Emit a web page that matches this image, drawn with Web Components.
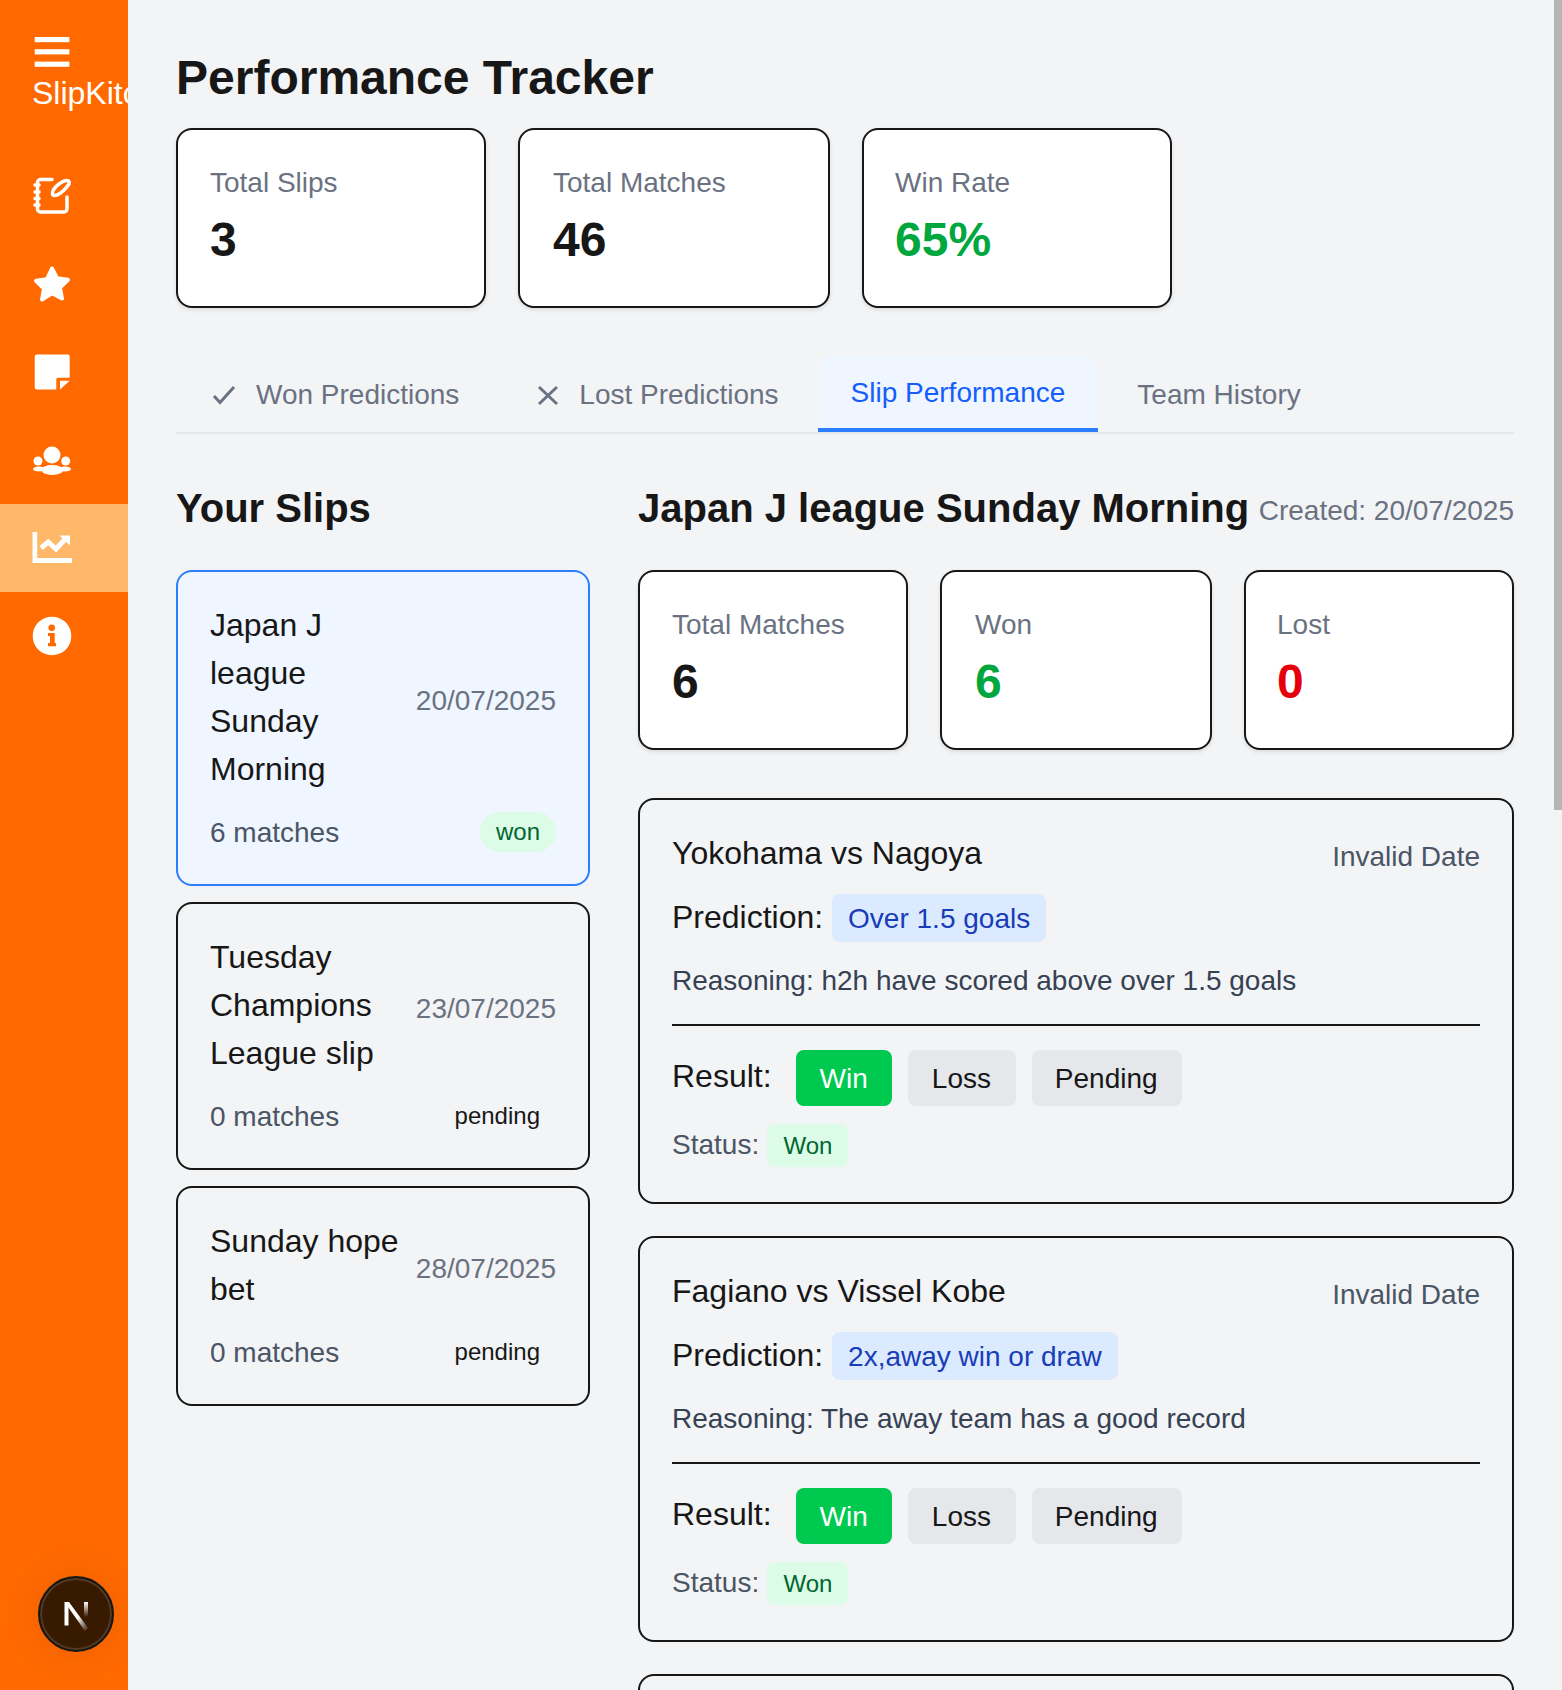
<!DOCTYPE html>
<html>
<head>
<meta charset="utf-8">
<title>Performance Tracker</title>
<style>
html, body {
  margin: 0;
  height: 1690px;
  overflow: hidden;
  background: #f3f4f6;
  color: #171717;
  font-family: "Liberation Sans", Arial, sans-serif;
}
</style>
</head>
<body>

<tracker-page>
  <side-bar slot="nav" brand="SlipKitchen"></side-bar>

  <page-title>Performance Tracker</page-title>

  <stat-grid columns="4">
    <stat-card><span slot="label">Total Slips</span>3</stat-card>
    <stat-card nudge="right"><span slot="label">Total Matches</span>46</stat-card>
    <stat-card nudge="left" tone="won"><span slot="label">Win Rate</span>65%</stat-card>
  </stat-grid>

  <tab-bar>
    <tab-item icon="check">Won Predictions</tab-item>
    <tab-item icon="cross">Lost Predictions</tab-item>
    <tab-item active>Slip Performance</tab-item>
    <tab-item>Team History</tab-item>
  </tab-bar>

  <split-view>
    <section-head slot="left">Your Slips</section-head>
    <slip-card slot="left" selected badge="won" date="20/07/2025" matches="6 matches">Japan J league Sunday Morning</slip-card>
    <slip-card slot="left" badge="pending" date="23/07/2025" matches="0 matches">Tuesday Champions League slip</slip-card>
    <slip-card slot="left" badge="pending" date="28/07/2025" matches="0 matches">Sunday hope bet</slip-card>

    <section-head created="Created: 20/07/2025">Japan J league Sunday Morning</section-head>
    <stat-grid columns="3">
      <stat-card><span slot="label">Total Matches</span>6</stat-card>
      <stat-card nudge="right" tone="won"><span slot="label">Won</span>6</stat-card>
      <stat-card nudge="left" tone="lost"><span slot="label">Lost</span>0</stat-card>
    </stat-grid>
    <match-list>
      <match-card teams="Yokohama vs Nagoya" date="Invalid Date" prediction="Over 1.5 goals" reasoning="h2h have scored above over 1.5 goals"></match-card>
      <match-card teams="Fagiano vs Vissel Kobe" date="Invalid Date" prediction="2x,away win or draw" reasoning="The away team has a good record"></match-card>
      <match-card bare></match-card>
    </match-list>
  </split-view>
</tracker-page>

<script>
class TrackerPage extends HTMLElement {
  constructor() {
    super();
    this._root = this.attachShadow({mode: 'open'});
  }
  connectedCallback() {
    this._root.innerHTML = `
<style>
:host { display: flex; height: 1690px; overflow: hidden; position: relative; }
.main { flex: 1; min-width: 0; padding: 48px 48px 0; }
.thumb { position: absolute; top: 0; right: 0; width: 8px; height: 810px; background: #b5b5b5; }
</style>
<slot name="nav"></slot>
<div class="main"><slot></slot></div>
<div class="thumb"></div>
`;
  }
}

class SideBar extends HTMLElement {
  constructor() {
    super();
    this._root = this.attachShadow({mode: 'open'});
  }
  connectedCallback() {
    this._root.innerHTML = `
<style>
:host { display: block; position: relative; flex: none; width: 128px; height: 1690px; background: #ff6900; color: #fff; overflow: hidden; }
.head { padding: 32px 0 38px 32px; white-space: nowrap; }
.head svg { display: block; }
.brand { font-size: 32px; line-height: 42px; }
.item { height: 88px; padding: 24px 32px; box-sizing: border-box; }
.item.on { background: #ffb86a; }
svg { display: block; width: 40px; height: 40px; }
.dev {
  position: absolute; left: 38px; top: 1576px; width: 76px; height: 76px; box-sizing: border-box;
  border-radius: 50%; background: #381a00; border: 2px solid #171717;
  box-shadow: inset 0 0 0 2px #533a22, 0 0 40px rgba(0,0,0,.08);
  display: flex; align-items: center; justify-content: center;
}
.dev svg { width: 24px; height: 29px; margin: 4px 1px 0 0; }
</style>
<div class="head">
  <svg viewBox="0 0 40 40" fill="#fff"><rect x="2.7" y="5" width="34.7" height="5.2"/><rect x="2.7" y="17.2" width="34.7" height="5.2"/><rect x="2.7" y="29.6" width="34.7" height="5.2"/></svg>
  <div class="brand">${this.getAttribute('brand')}</div>
</div>
<div class="item">
  <svg viewBox="0 0 40 40" fill="none" stroke="#fff" stroke-width="3.5" stroke-linecap="round" stroke-linejoin="round">
    <path d="M20 3.500H8.500a3 3 0 0 0-3 3V33a3 3 0 0 0 3 3h23.500a3 3 0 0 0 3-3V21"/>
    <path d="M3 9h4M3 16h4M3 22.500h4M3 29h4"/>
    <path d="M20.500 17.500C20.500 12 30 4.500 35 4.500c2 0 2.800 2 2 3.500-3 5-10 11.500-14.500 11.500-1.500 0-2-.5-2-2z"/>
  </svg>
</div>
<div class="item">
  <svg viewBox="0 0 40 40" fill="#fff" stroke="#fff" stroke-width="4" stroke-linejoin="round"><path d="M20 4.500l5 9.700 11 1.600-8 7.700 2 11-10-5.200L10 35.500l2-11-8-7.700 11-1.600z"/></svg>
</div>
<div class="item">
  <svg viewBox="0 0 40 40" fill="#fff"><path d="M4.700 2.500h31a2 2 0 0 1 2 2v21.300H26a1.700 1.700 0 0 0-1.700 1.700v10H4.700a2 2 0 0 1-2-2V4.500a2 2 0 0 1 2-2z"/><path d="M28 28.800h9.700L28 37.500z"/></svg>
</div>
<div class="item">
  <svg viewBox="0 0 40 40" fill="#fff"><circle cx="20" cy="15" r="8.500"/><circle cx="6" cy="21" r="4.500"/><circle cx="33.700" cy="21" r="4.500"/><ellipse cx="20.300" cy="30" rx="11" ry="5"/><ellipse cx="7" cy="29" rx="6" ry="2.500"/><ellipse cx="33" cy="29" rx="6" ry="2.500"/></svg>
</div>
<div class="item on">
  <svg viewBox="0 0 40 40" fill="#fff"><path d="M0.500 4h4.700v26H40v5H0.500z"/><path d="M27.500 7.500h10.500V17.500z"/><path d="M9 20l7.300-6 7.700 7 9.300-10" fill="none" stroke="#fff" stroke-width="5"/></svg>
</div>
<div class="item">
  <svg viewBox="0 0 40 40"><circle cx="20" cy="20" r="19.300" fill="#fff"/><circle cx="19.700" cy="11.700" r="3.300" fill="#ff6900"/><path d="M16 17h6.700v10H24v3.300h-8V27h2v-7h-2z" fill="#ff6900"/></svg>
</div>
<div class="dev">
  <svg viewBox="0 0 24 29">
    <defs>
      <linearGradient id="d" x1="0" y1="0" x2="1" y2="1"><stop offset=".55" stop-color="#fff"/><stop offset="1" stop-color="#fff" stop-opacity="0"/></linearGradient>
      <linearGradient id="r" x1="0" y1="0" x2="0" y2="1"><stop offset="0" stop-color="#fff"/><stop offset="1" stop-color="#fff" stop-opacity="0"/></linearGradient>
    </defs>
    <rect x="0.500" y="0" width="4" height="23.500" fill="#fff"/>
    <path d="M0.500 0h4.500l19 26-3 3z" fill="url(#d)"/>
    <rect x="20" y="0" width="4" height="15" fill="url(#r)"/>
  </svg>
</div>
`;
  }
}

class PageTitle extends HTMLElement {
  constructor() {
    super();
    this.attachShadow({mode: 'open'}).innerHTML = `
<style>
:host { display: block; font-size: 48px; line-height: 64px; font-weight: 700; margin: -2px 0 18px; }
</style>
<slot></slot>
`;
  }
}

class StatGrid extends HTMLElement {
  constructor() {
    super();
    // reference columns land on whole css px at scale 2, so the middle one is wider
    this.attachShadow({mode: 'open'}).innerHTML = `
<style>
:host { display: grid; gap: 32px; grid-template-columns: 270px 272px 270px; }
:host([columns="4"]) { grid-template-columns: 310px 312px 310px 1fr; }
</style>
<slot></slot>
`;
  }
}

class StatCard extends HTMLElement {
  constructor() {
    super();
    this.attachShadow({mode: 'open'}).innerHTML = `
<style>
:host {
  display: block; background: #fff; border: 2px solid #171717; border-radius: 16px;
  padding: 32px; box-shadow: 0 2px 4px rgba(0,0,0,.1); height: 180px; box-sizing: border-box;
}
:host([nudge="right"]) { padding-left: 33px; }
:host([nudge="left"]) { padding-left: 31px; }
.label { font-size: 28px; line-height: 40px; color: #6a7282; margin-top: 1px; }
.value { font-size: 48px; line-height: 64px; font-weight: 700; margin-top: 5px; }
:host([tone="won"]) .value { color: #00a63e; }
:host([tone="lost"]) .value { color: #e7000b; }
</style>
<div class="label"><slot name="label"></slot></div>
<div class="value"><slot></slot></div>
`;
  }
}

class TabBar extends HTMLElement {
  constructor() {
    super();
    this.attachShadow({mode: 'open'}).innerHTML = `
<style>
:host { display: flex; gap: 8px; margin-top: 48px; border-bottom: 2px solid #e5e7eb; }
</style>
<slot></slot>
`;
  }
}

const TAB_ICONS = {
  check: '<polyline points="6,17 12,23.5 26,8"/>',
  cross: '<path d="M8 8l18 17M26 8L8 25"/>'
};

class TabItem extends HTMLElement {
  constructor() {
    super();
    this._root = this.attachShadow({mode: 'open'});
  }
  connectedCallback() {
    let icon = TAB_ICONS[this.getAttribute('icon')];
    this._root.innerHTML = `
<style>
:host {
  display: flex; align-items: flex-start; height: 76px; box-sizing: border-box;
  padding: 19px 32px 0; font-size: 28px; line-height: 40px; color: #6a7282;
  border-bottom: 4px solid transparent; border-radius: 16px 16px 0 0;
}
:host([active]) { padding: 17px 33px 0; margin: 0 -1px; color: #155dfc; background: #eff6ff; border-bottom-color: #2b7fff; }
svg { flex: none; width: 32px; height: 32px; margin: 4px 16px 0 0; fill: none; stroke: #6a7282; stroke-width: 3; }
</style>
${icon ? `<svg viewBox="0 0 32 32">${icon}</svg>` : ''}<slot></slot>
`;
  }
}

class SplitView extends HTMLElement {
  constructor() {
    super();
    this.attachShadow({mode: 'open'}).innerHTML = `
<style>
:host { display: grid; grid-template-columns: repeat(3, minmax(0, 1fr)); gap: 48px; margin-top: 48px; }
.left { display: flex; flex-direction: column; gap: 16px; }
.right { grid-column: span 2; }
</style>
<div class="left"><slot name="left"></slot></div>
<div class="right"><slot></slot></div>
`;
  }
}

class SectionHead extends HTMLElement {
  constructor() {
    super();
    this._root = this.attachShadow({mode: 'open'});
  }
  connectedCallback() {
    let created = this.getAttribute('created');
    this._root.innerHTML = `
<style>
:host { display: flex; justify-content: space-between; align-items: center; margin-bottom: 32px; }
:host([slot="left"]) { margin-bottom: 16px; }
h2 { margin: -2px 0 2px; font-size: 40px; line-height: 56px; font-weight: 700; }
span { font-size: 28px; line-height: 40px; color: #6a7282; margin-top: 2px; }
</style>
<h2><slot></slot></h2>
${created ? `<span>${created}</span>` : ''}
`;
  }
}

class SlipCard extends HTMLElement {
  constructor() {
    super();
    this._root = this.attachShadow({mode: 'open'});
  }
  connectedCallback() {
    let badge = this.getAttribute('badge');
    this._root.innerHTML = `
<style>
:host { display: block; padding: 32px; border: 2px solid #171717; border-radius: 16px; }
:host([selected]) { background: #eff6ff; border-color: #2b7fff; }
.top, .bottom { display: flex; justify-content: space-between; align-items: center; }
.name { font-size: 32px; line-height: 48px; margin: -3px 0 3px; }
.date { font-size: 28px; line-height: 40px; color: #6a7282; white-space: nowrap; margin-top: 2px; }
.bottom { height: 40px; margin-top: 16px; font-size: 28px; line-height: 40px; color: #4a5565; }
.count { margin: 1px 0 -1px; }
.badge { font-size: 24px; line-height: 32px; padding: 4px 16px; border-radius: 999px; color: #171717; }
.badge.won { background: #dcfce7; color: #016630; }
</style>
<div class="top">
  <div class="name"><slot></slot></div>
  <div class="date">${this.getAttribute('date')}</div>
</div>
<div class="bottom">
  <span class="count">${this.getAttribute('matches')}</span>
  <span class="badge ${badge}">${badge}</span>
</div>
`;
  }
}

class MatchList extends HTMLElement {
  constructor() {
    super();
    this.attachShadow({mode: 'open'}).innerHTML = `
<style>
:host { display: flex; flex-direction: column; gap: 32px; margin-top: 48px; }
</style>
<slot></slot>
`;
  }
}

class MatchCard extends HTMLElement {
  constructor() {
    super();
    this._root = this.attachShadow({mode: 'open'});
  }
  connectedCallback() {
    if (this.hasAttribute('bare')) {
      // only the top edge of this card is inside the photograph
      this._root.innerHTML = `
<style>
:host { display: block; height: 406px; border: 2px solid #171717; border-radius: 16px; box-sizing: border-box; }
</style>
`;
      return;
    }
    this._root.innerHTML = `
<style>
:host { display: block; height: 406px; box-sizing: border-box; padding: 32px; border: 2px solid #171717; border-radius: 16px; }
.top { display: flex; justify-content: space-between; align-items: center; font-size: 32px; line-height: 48px; }
.teams { margin: -3px 0 3px; }
.date { font-size: 28px; line-height: 40px; color: #4a5565; margin-top: 2px; }
.pred { margin-top: 13px; font-size: 32px; line-height: 48px; }
.tip { font-size: 28px; line-height: 40px; padding: 9px 16px 8px; border-radius: 8px; background: #dbeafe; color: #193cb8; }
.why { margin-top: 20px; font-size: 28px; line-height: 40px; color: #364153; padding-bottom: 23px; border-bottom: 2px solid #171717; }
.result { display: flex; margin-top: 24px; }
.result span { font-size: 32px; line-height: 48px; margin: 2px 24px 0 0; }
button {
  font: inherit; font-size: 28px; line-height: 40px; padding: 9px 24px 7px; margin: 0 16px 0 0;
  border: 0; border-radius: 8px; background: #e5e7eb; color: #171717; text-align: left; box-sizing: border-box;
}
button.on { background: #00c950; color: #fff; }
button.loss { width: 108px; padding-right: 0; }
button.pend { width: 150px; padding-left: 23px; padding-right: 0; }
.status { margin-top: 19px; font-size: 28px; line-height: 40px; color: #4a5565; }
.status b { font-weight: 400; font-size: 24px; line-height: 32px; padding: 8px 16px; margin-left: .5px; border-radius: 8px; background: #dcfce7; color: #016630; }
</style>
<div class="top"><div class="teams">${this.getAttribute('teams')}</div><div class="date">${this.getAttribute('date')}</div></div>
<div class="pred">Prediction: <span class="tip">${this.getAttribute('prediction')}</span></div>
<div class="why">Reasoning: ${this.getAttribute('reasoning')}</div>
<div class="result"><span>Result:</span><button class="on">Win</button><button class="loss">Loss</button><button class="pend">Pending</button></div>
<div class="status">Status: <b>Won</b></div>
`;
  }
}

window.customElements.define('tracker-page', TrackerPage);
window.customElements.define('side-bar', SideBar);
window.customElements.define('page-title', PageTitle);
window.customElements.define('stat-grid', StatGrid);
window.customElements.define('stat-card', StatCard);
window.customElements.define('tab-bar', TabBar);
window.customElements.define('tab-item', TabItem);
window.customElements.define('split-view', SplitView);
window.customElements.define('section-head', SectionHead);
window.customElements.define('slip-card', SlipCard);
window.customElements.define('match-list', MatchList);
window.customElements.define('match-card', MatchCard);
</script>
</body>
</html>
